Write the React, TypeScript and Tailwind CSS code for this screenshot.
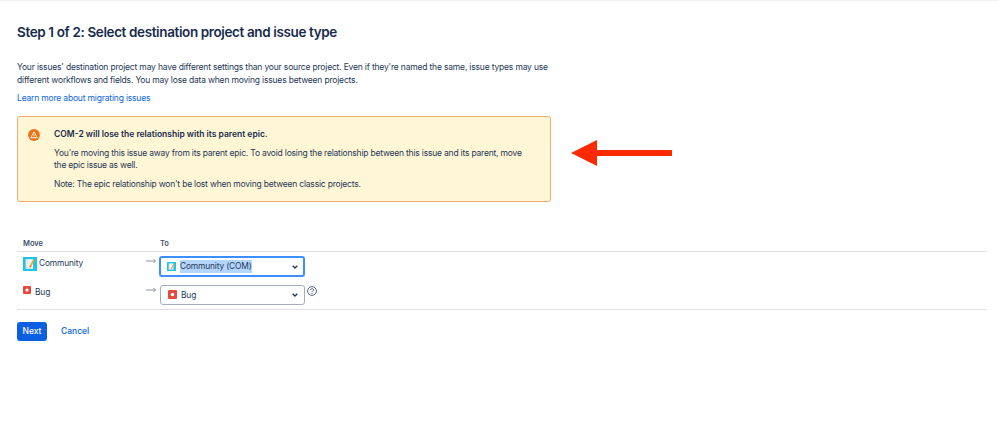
const font = "font-['Inter','Liberation_Sans',sans-serif]";

function ProjectIcon({ size }: { size: number }) {
  return (
    <svg width={size} height={size} viewBox="0 0 16 16" className="shrink-0">
      <rect width="16" height="16" fill="#1fc4e8" />
      <rect x="3" y="2.5" width="8.5" height="11" fill="#f4f5f7" />
      <path d="M4 4.5h1M4 7h1M4 9.5h1M4 12h1" stroke="#8993a4" strokeWidth="0.7" />
      <path d="M11.6 2.6 13.2 3.6 9.4 11 7.6 12.2 7.7 10Z" fill="#f6a623" />
      <path d="M7.6 12.2 7.7 10 9.4 11Z" fill="#de350b" />
    </svg>
  );
}

function BugIcon({ size }: { size: number }) {
  return (
    <svg width={size} height={size} viewBox="0 0 16 16" className="shrink-0">
      <rect width="16" height="16" rx="2" fill="#e5493a" />
      <circle cx="8" cy="8" r="3.2" fill="#fff" />
    </svg>
  );
}

function FlowArrow() {
  return (
    <svg width="10" height="8" viewBox="0 0 10 8" className="shrink-0">
      <path d="M0 4h9.5M7.5 2 9.5 4 7.5 6" fill="none" stroke="#7a869a" strokeWidth="0.9" />
    </svg>
  );
}

function Select({ focused, children }: { focused?: boolean; children: React.ReactNode }) {
  return (
    <div
      className={
        focused
          ? "flex h-[21px] w-[146px] items-center rounded-[3px] border-2 border-[#3d8eff] pl-[6px] pr-[5px]"
          : "flex h-[20px] w-[145px] items-center rounded-[3px] border border-[#a5adba] pl-[7px] pr-[6px]"
      }
    >
      <div className="flex flex-1 items-center gap-[4px] text-[8.4px] tracking-[-0.15px] text-[#253858]">{children}</div>
      <svg width="6" height="4" viewBox="0 0 6 4">
        <path d="M.7.7 3 3 5.3.7" fill="none" stroke="#253858" strokeWidth="1.3" />
      </svg>
    </div>
  );
}

export default function App() {
  return (
    <div className={`relative h-[445px] w-[999px] overflow-hidden border-t border-[#f0f0f0] bg-white pl-[17px] ${font}`}>
      <h1 className="mt-[22px] text-[13.5px] font-semibold leading-[18px] tracking-[-0.38px] text-[#172b4d]">
        Step 1 of 2: Select destination project and issue type
      </h1>

      <p className="mt-[20px] w-[534px] text-[8.5px] leading-[12.5px] tracking-[-0.18px] text-[#253858]">
        Your issues' destination project may have different settings than your source project. Even if they're named the same, issue types may use different workflows and fields. You may lose data when moving issues between projects.
      </p>
      <a className="mt-[6px] block text-[8.5px] leading-[12px] tracking-[-0.18px] text-[#0c66e4]">Learn more about migrating issues</a>

      <div className="mt-[12px] flex h-[86px] w-[534px] rounded-[3px] border border-[#f5a96b] bg-[#fff6d6] pl-[10px] pt-[11px]">
        <svg width="12" height="12" viewBox="0 0 13 13" className="mt-[1px] shrink-0">
          <circle cx="6.5" cy="6.5" r="6.4" fill="#f0700f" />
          <path d="M6.5 3 10 9.5H3Z" fill="none" stroke="#fff" strokeWidth="1" strokeLinejoin="round" />
          <path d="M6.5 5.2v2.2M6.5 8v.6" stroke="#fff" strokeWidth="0.8" />
        </svg>
        <div className="ml-[14px] w-[480px] text-[8.5px] leading-[12px] tracking-[-0.2px] text-[#253858]">
          <p className="font-semibold tracking-normal text-[#172b4d]">COM-2 will lose the relationship with its parent epic.</p>
          <p className="mt-[7px]">
            You're moving this issue away from its parent epic. To avoid losing the relationship between this issue and its parent, move the epic issue as well.
          </p>
          <p className="mt-[7px]">Note: The epic relationship won't be lost when moving between classic projects.</p>
        </div>
      </div>

      <div className="mt-[36px] flex h-[14px] w-[970px] border-b border-[#dfe1e6] pl-[6px] text-[7.5px] font-semibold leading-[12px] text-[#42526e]">
        <span className="w-[137px]">Move</span>
        <span>To</span>
      </div>

      <div className="w-[970px] border-b border-[#dfe1e6] pb-[4px]">
        <div className="flex h-[33px] pt-[4px]">
          <div className="flex w-[128px] items-start gap-[2px] pl-[6px] pt-[1px] text-[8.4px] leading-[12px] tracking-[-0.15px] text-[#253858]">
            <ProjectIcon size={14} />
            <span>Community</span>
          </div>
          <div className="w-[14px] pl-[1px] pt-[1px]"><FlowArrow /></div>
          <Select focused>
            <ProjectIcon size={9} />
            <span className="bg-[#b4d5fe]">Community (COM)</span>
          </Select>
        </div>
        <div className="flex h-[20px]">
          <div className="flex w-[128px] items-start gap-[4px] pl-[6px] pt-[1px] text-[8.4px] leading-[12px] tracking-[-0.15px] text-[#253858]">
            <BugIcon size={8} />
            <span>Bug</span>
          </div>
          <div className="w-[15px] pl-[1px] pt-[1px]"><FlowArrow /></div>
          <Select>
            <BugIcon size={9} />
            <span>Bug</span>
          </Select>
          <svg width="10" height="10" viewBox="0 0 10 10" className="ml-[2px] mt-[1px]">
            <circle cx="5" cy="5" r="4.4" fill="none" stroke="#42526e" strokeWidth="0.9" />
            <path d="M3.6 4c0-1.9 2.9-1.9 2.9-.1 0 1-1.5 1-1.5 2.1M5 7v.8" fill="none" stroke="#42526e" strokeWidth="0.9" />
          </svg>
        </div>
      </div>

      <div className="mt-[12px] flex items-center gap-[14px] text-[8.5px] font-medium">
        <button className="h-[19px] w-[30px] rounded-[3px] bg-[#0b5fe0] text-white">Next</button>
        <a className="text-[#0c66e4]">Cancel</a>
      </div>

      {/* red annotation arrow */}
      <svg width="102" height="28" viewBox="0 0 102 28" className="absolute left-[571px] top-[138px]">
        <path d="M0 14 26 1V11H101V17H26V27Z" fill="#fb2a00" />
      </svg>
    </div>
  );
}
